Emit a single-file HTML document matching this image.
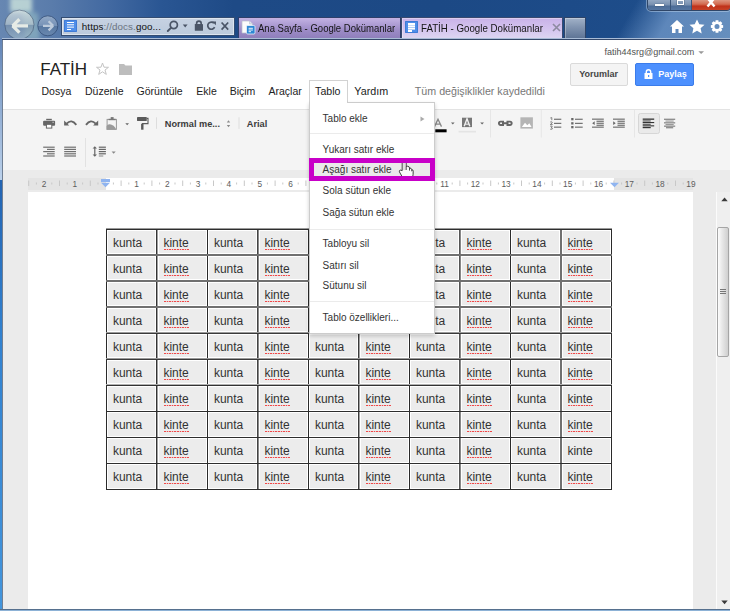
<!DOCTYPE html>
<html><head><meta charset="utf-8"><title>FATİH - Google Dokümanlar</title>
<style>
*{margin:0;padding:0;box-sizing:border-box}
html,body{width:730px;height:611px;overflow:hidden;background:#fff}
body{position:relative;font-family:"Liberation Sans",sans-serif}
.t{position:absolute;white-space:nowrap;line-height:1}
#chrome{position:absolute;left:0;top:0;width:730px;height:40px;
 background:linear-gradient(90deg,#6787b2 0%,#5a7cab 7%,#4269a1 15%,#2a5693 22%,#1e4a86 32%,#1c4985 60%,#1d4b88 78%,#1f4f8c 100%)}
#chrome2{position:absolute;left:560px;top:0;width:170px;height:40px;background:linear-gradient(120deg,rgba(100,140,190,0) 0%,rgba(100,140,190,0) 40%,rgba(105,145,195,0.85) 62%,rgba(110,150,195,0.9) 100%)}
#wc{position:absolute;left:646.5px;top:-2px;width:84px;height:12.6px;border:1px solid #2f4668;border-radius:0 0 4px 4px;overflow:hidden;background:#5f7ea6;box-shadow:0 0 0 1px rgba(200,220,240,0.45)}
.wcb{position:absolute;top:0;height:13px;border-right:1px solid #3a5478;background:linear-gradient(#98acc6 0%,#7890b0 45%,#4d6d98 55%,#5b7ba5 100%)}
#wclose{position:absolute;left:44.5px;top:0;width:39.5px;height:13px;background:linear-gradient(#e0a08c 0%,#d26a50 40%,#c0321a 55%,#c94a2e 100%)}
#addr{position:absolute;left:61px;top:17px;width:174px;height:19px;background:linear-gradient(#c6d2e2,#bccadc);border:1px solid #344d72;box-shadow:inset 0 0 0 1px #dde5ef}
.docicon{position:absolute;width:12.5px;height:12px;background:#4f8ee9;border-radius:1px;box-shadow:inset 0 0 0 1px #3f7bd6}
.docicon:after{content:"";position:absolute;left:2.5px;top:2.4px;width:7.5px;height:1.3px;background:#fff;box-shadow:0 2.3px 0 #fff,0 4.6px 0 #fff}
.docicon:before{content:"";position:absolute;left:2.5px;top:9.3px;width:4px;height:1.3px;background:#fff}
#tab1{position:absolute;left:238px;top:17px;width:162.5px;height:21px;background:linear-gradient(#c3b2e3,#9d8cc7 60%,#8f7fbb);border:1px solid #2e3f6a;border-bottom:none}
#tab2{position:absolute;left:400.5px;top:17px;width:162.5px;height:21px;background:linear-gradient(#c9b2e8,#d3c2ee 50%,#dcd5f1);border:1px solid #3a4a70;border-bottom:none;box-shadow:inset 1px 1px 0 rgba(255,255,255,0.35)}
#tab3{position:absolute;left:563.5px;top:17px;width:22px;height:21px;background:linear-gradient(#a2b2c8,#8194b0 45%,#5f7596);border:1px solid #2e4468;border-bottom:none;box-shadow:inset 1px 1px 0 rgba(255,255,255,0.3)}
#lframe{position:absolute;left:0;top:38px;width:3px;height:573px;background:linear-gradient(#6284b6 0px,#8aa8d0 60px,#b3cae6 130px,#bcd2ec 142.5px,#2364b2 142.5px,#3282d0 300px,#4395dc 571px)}
#bframe{position:absolute;left:0;top:609px;width:730px;height:2px;background:linear-gradient(#56708e 50%,#8db2d6 50%)}
#content{position:absolute;left:2px;top:38px;width:728px;height:571px;background:#fff;border-top:1px solid #a9bcd6;box-shadow:inset 0 1px 0 #34486a,inset 1px 0 0 #6f7f94}
#yorum{position:absolute;left:569.5px;top:63px;width:58.5px;height:23px;background:#f4f4f4;border:1px solid #dadada;border-radius:2px}
#paylas{position:absolute;left:635px;top:62.5px;width:59px;height:23.5px;background:#4d90fe;border:1px solid #3b7cea;border-radius:2px}
#toolbar{position:absolute;left:3px;top:109px;width:727px;height:61px;background:#f4f4f4;border-top:1px solid #e3e3e3}
#grayarea{position:absolute;left:3px;top:170px;width:727px;height:439px;background:#ebebeb}
#rulerg{position:absolute;top:177.5px;height:12px;background:#e4e4e4}
#rulerw{position:absolute;top:177.5px;height:12px;background:#fff}
#page{position:absolute;left:28px;top:192px;width:664.5px;height:417px;background:#fff}
#tbl .t{}
.sp{position:absolute;width:25.5px;height:1px;background:repeating-linear-gradient(90deg,#f04848 0 1.6px,rgba(240,72,72,0.25) 1.6px 2.6px)}
#tbl{position:absolute;left:0;top:0}
#tblbg{}
#sbar{position:absolute;left:716px;top:192px;width:14px;height:417px;background:#efefef;border-left:1px solid #fbfbfb}
#thumb{position:absolute;left:717px;top:227.3px;width:11.8px;height:130px;background:linear-gradient(90deg,#fdfdfd,#e8e8e8 40%,#cfcfcf);border:1px solid #a5a5a5;border-radius:2px}
#tabtab{position:absolute;left:309px;top:80.3px;width:39px;height:23px;background:#fff;border:1px solid #d2d2d2;border-bottom:none}
#dd{position:absolute;left:309px;top:102px;width:126px;height:232px;background:#fff;border:1px solid rgba(0,0,0,0.2);box-shadow:0 2px 4px rgba(0,0,0,0.2)}
#tabcover{position:absolute;left:310px;top:100px;width:37px;height:4px;background:#fff}
.sep{position:absolute;left:310px;width:124px;height:1px;background:#ebebeb}
#hl{position:absolute;left:310px;top:162.9px;width:124.5px;height:13.2px;background:#eaeaea}
#hlb{position:absolute;left:309.2px;top:157.9px;width:126.2px;height:23.2px;border:5px solid #c800c8}
</style></head>
<body>
<div id="chrome"></div>
<div id="chrome2"></div>
<svg style="position:absolute;left:0;top:0" width="64" height="40" viewBox="0 0 64 40">
 <defs>
  <linearGradient id="bbg" x1="0" y1="0" x2="0" y2="1">
   <stop offset="0" stop-color="#e2ebe8" stop-opacity="0.7"/>
   <stop offset="0.49" stop-color="#b9c8cf" stop-opacity="0.7"/>
   <stop offset="0.51" stop-color="#7d93ab" stop-opacity="0.6"/>
   <stop offset="1" stop-color="#b0c8d0" stop-opacity="0.55"/>
  </linearGradient>
  <linearGradient id="fbg" x1="0" y1="0" x2="0" y2="1">
   <stop offset="0" stop-color="#9db2cc" stop-opacity="0.85"/>
   <stop offset="0.49" stop-color="#7b95b8" stop-opacity="0.85"/>
   <stop offset="0.51" stop-color="#56769f" stop-opacity="0.9"/>
   <stop offset="1" stop-color="#6c8ab0" stop-opacity="0.9"/>
  </linearGradient>
  <filter id="gb" x="-50%" y="-50%" width="200%" height="200%"><feGaussianBlur stdDeviation="2.2"/></filter>
 </defs>
 <rect x="10" y="-3" width="22" height="15" fill="#d4ebe0" opacity="0.75" filter="url(#gb)"/>
 <path d="M22 10 L38 13 L40 40 L26 40 Z" fill="#a8d0cc" opacity="0.45" filter="url(#gb)"/>
 <circle cx="19.4" cy="24.7" r="14.6" fill="url(#bbg)" stroke="#3c506c" stroke-opacity="0.55" stroke-width="1"/>
 <path d="M12 25.9 L28 25.9 M12.6 25.9 L19.4 19.2 M12.6 25.9 L19.4 32.6" stroke="#e6ebe6" stroke-width="3.3" fill="none" stroke-linecap="butt" stroke-linejoin="miter"/>
 <circle cx="47.8" cy="25.8" r="10" fill="url(#fbg)" stroke="#354f78" stroke-opacity="0.8" stroke-width="1"/>
 <path d="M43 25.8 L53 25.8 M53.2 25.8 L48.6 21.2 M53.2 25.8 L48.6 30.4" stroke="#bccadb" stroke-width="2.3" fill="none"/>
</svg>
<div id="wc">
 <div class="wcb" style="left:0;width:23px"><div style="position:absolute;left:7px;top:4.5px;width:9px;height:2.5px;background:#fff;box-shadow:0 0 1px #123"></div></div>
 <div class="wcb" style="left:23px;width:21.5px"><div style="position:absolute;left:6.5px;top:0px;width:7px;height:6px;border:1.2px solid #fff;border-top-width:2.2px;box-shadow:0 0 1px #123"></div></div>
 <div id="wclose"><svg width="38" height="11" style="position:absolute;left:0;top:0"><path d="M15.5 -1 L22.5 7.5 M22.5 -1 L15.5 7.5" stroke="#fff" stroke-width="2.4"/></svg></div>
</div>
<div id="addr"></div>
<div class="docicon" style="left:64.4px;top:19.7px"></div>
<div class="t" style="left:81.8px;top:21.6px;font-size:9.8px;color:#111;letter-spacing:0.01em">https<span style="color:#6b7480">://docs.</span>goo...</div>
<svg style="position:absolute;left:166px;top:20px" width="66" height="14" viewBox="0 0 66 14">
 <circle cx="7.8" cy="5" r="3.6" stroke="#4a5567" stroke-width="1.7" fill="none"/>
 <path d="M5.2 7.6 L1.8 11" stroke="#4a5567" stroke-width="1.9" stroke-linecap="round"/>
 <path d="M16.8 4.6 L21.6 4.6 L19.2 7.4 Z" fill="#4a5567"/>
 <rect x="28.8" y="4" width="8.2" height="6.8" rx="0.6" fill="#4a5567"/>
 <path d="M30.6 4.5 L30.6 3.4 A2.3 2.3 0 0 1 35.2 3.4 L35.2 4.5" stroke="#4a5567" stroke-width="1.6" fill="none"/>
 <path d="M48.6 7.2 A3.6 3.6 0 1 1 48 3.2" stroke="#4a5567" stroke-width="1.7" fill="none"/>
 <path d="M46.2 1.6 L50 1.4 L49.8 5.2 Z" fill="#4a5567"/>
 <path d="M55.6 2.5 L62.2 9.6 M62.2 2.5 L55.6 9.6" stroke="#4a5567" stroke-width="1.7"/>
</svg>
<div id="tab1"></div>
<svg style="position:absolute;left:240px;top:19px" width="17" height="17" viewBox="0 0 17 17">
 <path d="M2 2 L9.5 2 L12.5 5 L12.5 14 L2 14 Z" fill="#fbfbfb" stroke="#b8bfcc" stroke-width="0.7"/>
 <path d="M9.5 2 L9.5 5 L12.5 5" fill="#dfe3ea" stroke="#b8bfcc" stroke-width="0.6"/>
 <rect x="6.5" y="6.5" width="8.5" height="8.5" rx="1.2" fill="#2c87d3" stroke="#e8f2fb" stroke-width="0.8"/>
 <path d="M8.6 9.3 H12.9 M8.6 11 H12.9 M8.6 12.7 H11" stroke="#fff" stroke-width="0.9"/>
</svg>
<div class="t" style="left:257.6px;top:22.6px;font-size:10.9px;color:#141414;transform:scaleX(0.875);transform-origin:0 0">Ana Sayfa - Google Dokümanlar</div>
<div id="tab2"></div>
<div class="docicon" style="left:405px;top:21px"></div>
<div class="t" style="left:421.3px;top:22.6px;font-size:10.9px;color:#141414;transform:scaleX(0.893);transform-origin:0 0">FATİH - Google Dokümanlar</div>
<svg style="position:absolute;left:552px;top:23px" width="9" height="9"><path d="M1 1 L8 8 M8 1 L1 8" stroke="#8d8aa0" stroke-width="1.6"/></svg>
<div id="tab3"></div>
<svg style="position:absolute;left:668px;top:18px" width="62" height="17" viewBox="0 0 62 17">
 <path d="M9 2 L2 8.5 L4 8.5 L4 15 L7.5 15 L7.5 11 L10.5 11 L10.5 15 L14 15 L14 8.5 L16 8.5 Z" fill="#fff"/>
 <path d="M29 1.5 L31.3 6.3 L36.5 6.8 L32.6 10.3 L33.7 15.5 L29 12.8 L24.3 15.5 L25.4 10.3 L21.5 6.8 L26.7 6.3 Z" fill="#fff"/>
 <g transform="translate(49 8.5)"><path d="M6.15 -1.37 L6.15 1.37 L4.27 1.71 L4.23 1.81 L5.32 3.38 L3.38 5.32 L1.81 4.23 L1.71 4.27 L1.37 6.15 L-1.37 6.15 L-1.71 4.27 L-1.81 4.23 L-3.38 5.32 L-5.32 3.38 L-4.23 1.81 L-4.27 1.71 L-6.15 1.37 L-6.15 -1.37 L-4.27 -1.71 L-4.23 -1.81 L-5.32 -3.38 L-3.38 -5.32 L-1.81 -4.23 L-1.71 -4.27 L-1.37 -6.15 L1.37 -6.15 L1.71 -4.27 L1.81 -4.23 L3.38 -5.32 L5.32 -3.38 L4.23 -1.81 L4.27 -1.71 Z M2.5 0 A2.5 2.5 0 1 0 -2.5 0 A2.5 2.5 0 1 0 2.5 0 Z" fill="#fff" fill-rule="evenodd"/></g>
</svg>
<div id="lframe"></div>
<div id="bframe"></div>
<div id="content"></div>
<div class="t" style="left:40.20px;top:60.81px;font-size:17px;color:#222;font-weight:400;">FATİH</div>
<svg style="position:absolute;left:96px;top:62px" width="38" height="14" viewBox="0 0 38 14">
 <path d="M6.5 1 L8 5.2 L12.5 5.3 L9 8 L10.3 12.4 L6.5 9.8 L2.7 12.4 L4 8 L0.5 5.3 L5 5.2 Z" fill="none" stroke="#c4c4c4" stroke-width="1"/>
 <path d="M23 2 L28 2 L29.5 3.5 L36 3.5 L36 13 L23 13 Z" fill="#bdbdbd"/>
</svg>
<div class="t" style="left:604.50px;top:47.58px;font-size:9px;color:#505050;font-weight:400;">fatih44srg@gmail.com</div>
<svg style="position:absolute;left:698px;top:51px" width="7" height="4"><path d="M0.3 0.3 L6 0.3 L3.15 3 Z" fill="#999"/></svg>
<div id="yorum"></div>
<div class="t" style="left:579.20px;top:69.78px;font-size:9px;color:#444;font-weight:700;">Yorumlar</div>
<div id="paylas"></div>
<svg style="position:absolute;left:644px;top:69px" width="9" height="10" viewBox="0 0 9 10">
 <rect x="0.5" y="4" width="8" height="6" rx="0.5" fill="#fff"/>
 <path d="M2.3 4.5 L2.3 3 A2.2 2.2 0 0 1 6.7 3 L6.7 4.5" stroke="#fff" stroke-width="1.4" fill="none"/>
 <rect x="4" y="6" width="1.2" height="2" fill="#4d90fe"/>
</svg>
<div class="t" style="left:658.20px;top:69.78px;font-size:9px;color:#fff;font-weight:700;">Paylaş</div>
<div class="t" style="left:41.50px;top:86.01px;font-size:10.5px;color:#222;font-weight:400;">Dosya</div>
<div class="t" style="left:85.00px;top:86.01px;font-size:10.5px;color:#222;font-weight:400;">Düzenle</div>
<div class="t" style="left:136.60px;top:86.01px;font-size:10.5px;color:#222;font-weight:400;">Görüntüle</div>
<div class="t" style="left:196.30px;top:86.01px;font-size:10.5px;color:#222;font-weight:400;">Ekle</div>
<div class="t" style="left:229.70px;top:86.01px;font-size:10.5px;color:#222;font-weight:400;">Biçim</div>
<div class="t" style="left:268.50px;top:86.01px;font-size:10.5px;color:#222;font-weight:400;">Araçlar</div>
<div class="t" style="left:315.80px;top:86.01px;font-size:10.5px;color:#222;font-weight:400;">Tablo</div>
<div class="t" style="left:354.30px;top:85.80px;font-size:10.75px;color:#222;font-weight:400;">Yardım</div>
<div class="t" style="left:414.80px;top:85.84px;font-size:10.7px;color:#777;font-weight:400;">Tüm değişiklikler kaydedildi</div>
<div id="toolbar"></div>
<div id="grayarea"></div>
<svg style="position:absolute;left:0;top:110px" width="730" height="60" viewBox="0 110 730 60">
 <g fill="#666">
  <!-- print -->
  <rect x="46.2" y="118.8" width="5.6" height="1.4"/>
  <rect x="43.1" y="120.8" width="12" height="5" rx="1"/>
  <rect x="46.4" y="124.3" width="5.4" height="3.8" fill="#fff" stroke="#666" stroke-width="1"/>
  <rect x="52.6" y="121.8" width="1" height="1" fill="#eee"/>
  <!-- undo -->
  <path d="M64.1 120.4 L64.1 125.6 L69.2 125.6 Z"/>
  <path d="M66.6 123.6 Q71.5 118.6 76.3 124.8" stroke="#666" stroke-width="1.9" fill="none"/>
  <!-- redo -->
  <path d="M98.2 120.4 L98.2 125.6 L93.1 125.6 Z"/>
  <path d="M95.7 123.6 Q90.8 118.6 86 124.8" stroke="#666" stroke-width="1.9" fill="none"/>
  <!-- paste -->
  <rect x="107.1" y="119.4" width="9.3" height="9.9" fill="none" stroke="#999" stroke-width="1"/>
  <rect x="110.7" y="117.1" width="2.9" height="2" fill="#777"/>
  <rect x="108.6" y="118.8" width="7" height="1.4" fill="#777"/>
  <path d="M106.6 129.8 L106.6 126 Q108 123.5 111 124.6 Q114 125.6 115.5 128 L116 129.8 Z" fill="#9a9a9a"/>
  <path d="M125.3 123.2 L129 123.2 L127.15 125.2 Z"/>
  <!-- paint format -->
  <rect x="137" y="117.1" width="9.8" height="3.9" rx="0.4" fill="#5a5a5a"/>
  <path d="M146.8 118.4 L148 118.4 L148 123.6 L142.3 123.6 L142.3 124.5" stroke="#5a5a5a" stroke-width="1.1" fill="none"/>
  <rect x="141.1" y="124" width="2.4" height="5.7" fill="#5a5a5a"/>
 </g>
 <rect x="156" y="117.3" width="1" height="11.5" fill="#ddd"/>
 <path d="M226.8 122.4 L230.2 122.4 L228.5 120.2 Z M226.8 125 L230.2 125 L228.5 127.2 Z" fill="#8a8a8a"/>
 <rect x="238.5" y="117.3" width="1" height="11.5" fill="#ddd"/>
 <!-- row 2 -->
 <g fill="#707070">
  <rect x="43.2" y="146.6" width="11.5" height="1.2"/>
  <rect x="47" y="148.8" width="7.7" height="1.2"/>
  <rect x="43.2" y="151.0" width="11.5" height="1.2"/>
  <rect x="47" y="153.2" width="7.7" height="1.2"/>
  <rect x="43.2" y="155.4" width="11.5" height="1.2"/>
  <rect x="64.2" y="146.6" width="11.8" height="1.2"/>
  <rect x="64.2" y="148.8" width="11.8" height="1.2"/>
  <rect x="64.2" y="151.0" width="11.8" height="1.2"/>
  <rect x="64.2" y="153.2" width="11.8" height="1.2"/>
  <rect x="64.2" y="155.4" width="11.8" height="1.2"/>
 </g>
 <rect x="85" y="138" width="1" height="29" fill="#e2e2e2"/>
 <g fill="#666">
  <rect x="94.2" y="148" width="1.2" height="7"/>
  <path d="M92.6 148.6 L97 148.6 L94.8 146.2 Z M92.6 154.4 L97 154.4 L94.8 156.8 Z"/>
  <rect x="98.8" y="146.6" width="7.1" height="1.2"/>
  <rect x="98.8" y="148.8" width="7.1" height="1.2"/>
  <rect x="98.8" y="151.0" width="7.1" height="1.2"/>
  <rect x="98.8" y="153.2" width="7.1" height="1.2"/>
  <rect x="98.8" y="155.4" width="4.5" height="1.2" fill="#999"/>
  <path d="M111.6 151.6 L115.7 151.6 L113.65 153.7 Z" fill="#888"/>
 </g>
 <!-- right part row1 -->
 <g fill="#666">
  <path d="M434.5 126.6 L438 119.2 L441.5 126.6 M436 124.2 H440" stroke="#888" stroke-width="1.3" fill="none"/>
  <rect x="435.3" y="129.3" width="11.3" height="3" fill="#000"/>
  <path d="M451 122.5 L454.6 122.5 L452.8 124.6 Z"/>
  <rect x="462" y="117.7" width="10" height="9.4" fill="#777"/>
  <path d="M464.2 126.2 L467 118.8 L469.8 126.2" stroke="#f1f1f1" stroke-width="1.4" fill="none"/>
  <rect x="465.2" y="123.6" width="3.6" height="1.1" fill="#f1f1f1"/>
  <rect x="458.6" y="130.8" width="17.4" height="1.7" fill="#e4e4e4"/>
  <path d="M480.2 122.5 L484 122.5 L482.1 124.6 Z"/>
 </g>
 <rect x="490" y="109.5" width="1" height="28" fill="#e6e6e6"/>
 <g fill="none" stroke="#666" stroke-width="1.9">
  <path d="M504 121.6 H500.6 A1.7 1.7 0 0 0 500.6 125 H504 M506.5 121.6 H510 A1.7 1.7 0 0 1 510 125 H506.5 M502 123.3 H508.5"/>
 </g>
 <rect x="520.4" y="117.3" width="12.5" height="11.3" fill="#b5b5b5"/>
 <path d="M521.8 127 L525 122.8 L527.3 125.2 L529.3 123.3 L531.6 127 Z" fill="#fff"/>
 <rect x="540.8" y="109.5" width="1" height="28" fill="#e6e6e6"/>
 <g fill="#666">
  <path d="M550.3 118 L551.8 117.6 L551.8 120.2" stroke="#777" stroke-width="0.9" fill="none"/>
  <path d="M550.2 122 Q552.5 121.3 552.3 122.8 L550.2 124.6 L552.7 124.6" stroke="#777" stroke-width="0.9" fill="none"/>
  <path d="M550.2 126.2 Q552.6 125.6 552.2 127 Q551.5 127.5 551 127.5 Q552.8 127.8 552.3 129 Q551 129.6 550.2 129.1" stroke="#777" stroke-width="0.9" fill="none"/>
  <rect x="554" y="118.7" width="7.3" height="1.1"/><rect x="554" y="122.8" width="7.3" height="1.1"/><rect x="554" y="126.6" width="7.3" height="1.1"/>
  <rect x="571.2" y="118" width="2.3" height="2.3"/><rect x="571.2" y="122.2" width="2.3" height="2.3"/><rect x="571.2" y="126" width="2.3" height="2.3"/>
  <rect x="575" y="118.7" width="7.7" height="1.1"/><rect x="575" y="122.8" width="7.7" height="1.1"/><rect x="575" y="126.6" width="7.7" height="1.1"/>
  <rect x="592" y="118.6" width="11.8" height="1.1"/><rect x="596.5" y="120.7" width="7.3" height="1.1"/><rect x="596.5" y="122.7" width="7.3" height="1.1"/><rect x="596.5" y="124.7" width="7.3" height="1.1"/><rect x="592" y="126.6" width="11.8" height="1.1"/>
  <path d="M594.7 121.3 L592.2 123.2 L594.7 125.1 Z"/>
  <rect x="613" y="118.6" width="11.8" height="1.1"/><rect x="617.5" y="120.7" width="7.3" height="1.1"/><rect x="617.5" y="122.7" width="7.3" height="1.1"/><rect x="617.5" y="124.7" width="7.3" height="1.1"/><rect x="613" y="126.6" width="11.8" height="1.1"/>
  <path d="M613.2 121.3 L615.7 123.2 L613.2 125.1 Z"/>
 </g>
 <rect x="634" y="109.5" width="1" height="28" fill="#e6e6e6"/>
 <rect x="638.5" y="113.5" width="21" height="20" rx="2" fill="#eaeaea" stroke="#d6d6d6" stroke-width="1"/>
 <g fill="#333">
  <rect x="642.7" y="118.5" width="11.5" height="1.3"/><rect x="642.7" y="120.3" width="8" height="1.3" fill="#666"/><rect x="642.7" y="122" width="11.5" height="1.1"/><rect x="642.7" y="123.7" width="8" height="1.3" fill="#666"/><rect x="642.7" y="125.3" width="11.5" height="1.1"/><rect x="642.7" y="127" width="8" height="1.2"/>
 </g>
 <g fill="#777">
  <rect x="664" y="118.7" width="11.2" height="1.1"/><rect x="665.5" y="120.5" width="8.2" height="1.1" fill="#999"/><rect x="664" y="122.3" width="11.2" height="1.1"/><rect x="665.5" y="124" width="8.2" height="1.1" fill="#999"/><rect x="664" y="125.6" width="11.2" height="1.1"/><rect x="666" y="127.2" width="7.2" height="1.1"/>
 </g>
</svg>
<div class="t" style="left:164.80px;top:119.61px;font-size:9.2px;color:#3c3c3c;font-weight:700;">Normal me...</div>
<div class="t" style="left:246.80px;top:119.61px;font-size:9.2px;color:#3c3c3c;font-weight:700;">Arial</div>
<div id="rulerg" style="left:27.5px;width:665px"></div>
<div id="rulerw" style="left:105.7px;width:508.4px"></div>
<svg style="position:absolute;left:0;top:176px" width="730" height="16" viewBox="0 176 730 16"><rect x="28.2" y="180.5" width="1" height="5.5" fill="#c8c8c8"/><rect x="35.9" y="182.5" width="1" height="2" fill="#c8c8c8"/><rect x="51.3" y="182.5" width="1" height="2" fill="#c8c8c8"/><rect x="59.0" y="180.5" width="1" height="5.5" fill="#c8c8c8"/><rect x="66.7" y="182.5" width="1" height="2" fill="#c8c8c8"/><rect x="82.1" y="182.5" width="1" height="2" fill="#c8c8c8"/><rect x="89.8" y="180.5" width="1" height="5.5" fill="#c8c8c8"/><rect x="97.5" y="182.5" width="1" height="2" fill="#c8c8c8"/><rect x="112.9" y="182.5" width="1" height="2" fill="#c8c8c8"/><rect x="120.6" y="180.5" width="1" height="5.5" fill="#c8c8c8"/><rect x="128.3" y="182.5" width="1" height="2" fill="#c8c8c8"/><rect x="143.7" y="182.5" width="1" height="2" fill="#c8c8c8"/><rect x="151.4" y="180.5" width="1" height="5.5" fill="#c8c8c8"/><rect x="159.1" y="182.5" width="1" height="2" fill="#c8c8c8"/><rect x="174.5" y="182.5" width="1" height="2" fill="#c8c8c8"/><rect x="182.2" y="180.5" width="1" height="5.5" fill="#c8c8c8"/><rect x="189.9" y="182.5" width="1" height="2" fill="#c8c8c8"/><rect x="205.3" y="182.5" width="1" height="2" fill="#c8c8c8"/><rect x="213.0" y="180.5" width="1" height="5.5" fill="#c8c8c8"/><rect x="220.7" y="182.5" width="1" height="2" fill="#c8c8c8"/><rect x="236.1" y="182.5" width="1" height="2" fill="#c8c8c8"/><rect x="243.8" y="180.5" width="1" height="5.5" fill="#c8c8c8"/><rect x="251.5" y="182.5" width="1" height="2" fill="#c8c8c8"/><rect x="266.9" y="182.5" width="1" height="2" fill="#c8c8c8"/><rect x="274.6" y="180.5" width="1" height="5.5" fill="#c8c8c8"/><rect x="282.3" y="182.5" width="1" height="2" fill="#c8c8c8"/><rect x="297.7" y="182.5" width="1" height="2" fill="#c8c8c8"/><rect x="305.4" y="180.5" width="1" height="5.5" fill="#c8c8c8"/><rect x="313.1" y="182.5" width="1" height="2" fill="#c8c8c8"/><rect x="328.5" y="182.5" width="1" height="2" fill="#c8c8c8"/><rect x="336.2" y="180.5" width="1" height="5.5" fill="#c8c8c8"/><rect x="343.9" y="182.5" width="1" height="2" fill="#c8c8c8"/><rect x="359.3" y="182.5" width="1" height="2" fill="#c8c8c8"/><rect x="367.0" y="180.5" width="1" height="5.5" fill="#c8c8c8"/><rect x="374.7" y="182.5" width="1" height="2" fill="#c8c8c8"/><rect x="390.1" y="182.5" width="1" height="2" fill="#c8c8c8"/><rect x="397.8" y="180.5" width="1" height="5.5" fill="#c8c8c8"/><rect x="405.5" y="182.5" width="1" height="2" fill="#c8c8c8"/><rect x="420.9" y="182.5" width="1" height="2" fill="#c8c8c8"/><rect x="428.6" y="180.5" width="1" height="5.5" fill="#c8c8c8"/><rect x="436.3" y="182.5" width="1" height="2" fill="#c8c8c8"/><rect x="451.7" y="182.5" width="1" height="2" fill="#c8c8c8"/><rect x="459.4" y="180.5" width="1" height="5.5" fill="#c8c8c8"/><rect x="467.1" y="182.5" width="1" height="2" fill="#c8c8c8"/><rect x="482.5" y="182.5" width="1" height="2" fill="#c8c8c8"/><rect x="490.2" y="180.5" width="1" height="5.5" fill="#c8c8c8"/><rect x="497.9" y="182.5" width="1" height="2" fill="#c8c8c8"/><rect x="513.3" y="182.5" width="1" height="2" fill="#c8c8c8"/><rect x="521.0" y="180.5" width="1" height="5.5" fill="#c8c8c8"/><rect x="528.7" y="182.5" width="1" height="2" fill="#c8c8c8"/><rect x="544.1" y="182.5" width="1" height="2" fill="#c8c8c8"/><rect x="551.8" y="180.5" width="1" height="5.5" fill="#c8c8c8"/><rect x="559.5" y="182.5" width="1" height="2" fill="#c8c8c8"/><rect x="574.9" y="182.5" width="1" height="2" fill="#c8c8c8"/><rect x="582.6" y="180.5" width="1" height="5.5" fill="#c8c8c8"/><rect x="590.3" y="182.5" width="1" height="2" fill="#c8c8c8"/><rect x="605.7" y="182.5" width="1" height="2" fill="#c8c8c8"/><rect x="613.4" y="180.5" width="1" height="5.5" fill="#c8c8c8"/><rect x="621.1" y="182.5" width="1" height="2" fill="#c8c8c8"/><rect x="636.5" y="182.5" width="1" height="2" fill="#c8c8c8"/><rect x="644.2" y="180.5" width="1" height="5.5" fill="#c8c8c8"/><rect x="651.9" y="182.5" width="1" height="2" fill="#c8c8c8"/><rect x="667.3" y="182.5" width="1" height="2" fill="#c8c8c8"/><rect x="675.0" y="180.5" width="1" height="5.5" fill="#c8c8c8"/><rect x="682.7" y="182.5" width="1" height="2" fill="#c8c8c8"/></svg>
<div class="t rn" style="left:24.1px;top:180.4px;width:40px;text-align:center;font-size:8.3px;color:#5c5c5c">2</div>
<div class="t rn" style="left:54.9px;top:180.4px;width:40px;text-align:center;font-size:8.3px;color:#5c5c5c">1</div>
<div class="t rn" style="left:116.5px;top:180.4px;width:40px;text-align:center;font-size:8.3px;color:#5c5c5c">1</div>
<div class="t rn" style="left:147.3px;top:180.4px;width:40px;text-align:center;font-size:8.3px;color:#5c5c5c">2</div>
<div class="t rn" style="left:178.1px;top:180.4px;width:40px;text-align:center;font-size:8.3px;color:#5c5c5c">3</div>
<div class="t rn" style="left:208.9px;top:180.4px;width:40px;text-align:center;font-size:8.3px;color:#5c5c5c">4</div>
<div class="t rn" style="left:239.7px;top:180.4px;width:40px;text-align:center;font-size:8.3px;color:#5c5c5c">5</div>
<div class="t rn" style="left:270.5px;top:180.4px;width:40px;text-align:center;font-size:8.3px;color:#5c5c5c">6</div>
<div class="t rn" style="left:301.3px;top:180.4px;width:40px;text-align:center;font-size:8.3px;color:#5c5c5c">7</div>
<div class="t rn" style="left:332.1px;top:180.4px;width:40px;text-align:center;font-size:8.3px;color:#5c5c5c">8</div>
<div class="t rn" style="left:362.9px;top:180.4px;width:40px;text-align:center;font-size:8.3px;color:#5c5c5c">9</div>
<div class="t rn" style="left:393.7px;top:180.4px;width:40px;text-align:center;font-size:8.3px;color:#5c5c5c">10</div>
<div class="t rn" style="left:424.5px;top:180.4px;width:40px;text-align:center;font-size:8.3px;color:#5c5c5c">11</div>
<div class="t rn" style="left:455.3px;top:180.4px;width:40px;text-align:center;font-size:8.3px;color:#5c5c5c">12</div>
<div class="t rn" style="left:486.1px;top:180.4px;width:40px;text-align:center;font-size:8.3px;color:#5c5c5c">13</div>
<div class="t rn" style="left:516.9px;top:180.4px;width:40px;text-align:center;font-size:8.3px;color:#5c5c5c">14</div>
<div class="t rn" style="left:547.7px;top:180.4px;width:40px;text-align:center;font-size:8.3px;color:#5c5c5c">15</div>
<div class="t rn" style="left:578.5px;top:180.4px;width:40px;text-align:center;font-size:8.3px;color:#5c5c5c">16</div>
<div class="t rn" style="left:609.3px;top:180.4px;width:40px;text-align:center;font-size:8.3px;color:#5c5c5c">17</div>
<div class="t rn" style="left:640.1px;top:180.4px;width:40px;text-align:center;font-size:8.3px;color:#5c5c5c">18</div>
<div class="t rn" style="left:670.9px;top:180.4px;width:40px;text-align:center;font-size:8.3px;color:#5c5c5c">19</div>
<svg style="position:absolute;left:100.2px;top:178px" width="11" height="10" viewBox="0 0 11 10">
 <rect x="1" y="1" width="9" height="3" fill="#8fb4f0"/>
 <path d="M1 4.8 L10 4.8 L5.5 9.2 Z" fill="#8fb4f0"/>
</svg>
<svg style="position:absolute;left:608.6px;top:182px" width="11" height="6" viewBox="0 0 11 6">
 <path d="M1 0.8 L10 0.8 L5.5 5.2 Z" fill="#8fb4f0"/>
</svg>
<div id="page"></div>
<svg style="position:absolute;left:0;top:0" width="730" height="611" shape-rendering="crispEdges"><rect x="108" y="231" width="47" height="22" fill="#ececec"/><rect x="159" y="231" width="47" height="22" fill="#ececec"/><rect x="209" y="231" width="47" height="22" fill="#ececec"/><rect x="260" y="231" width="47" height="22" fill="#ececec"/><rect x="310" y="231" width="47" height="22" fill="#ececec"/><rect x="361" y="231" width="47" height="22" fill="#ececec"/><rect x="411" y="231" width="47" height="22" fill="#ececec"/><rect x="462" y="231" width="47" height="22" fill="#ececec"/><rect x="512" y="231" width="47" height="22" fill="#ececec"/><rect x="563" y="231" width="47" height="22" fill="#ececec"/><rect x="108" y="257" width="47" height="22" fill="#ececec"/><rect x="159" y="257" width="47" height="22" fill="#ececec"/><rect x="209" y="257" width="47" height="22" fill="#ececec"/><rect x="260" y="257" width="47" height="22" fill="#ececec"/><rect x="310" y="257" width="47" height="22" fill="#ececec"/><rect x="361" y="257" width="47" height="22" fill="#ececec"/><rect x="411" y="257" width="47" height="22" fill="#ececec"/><rect x="462" y="257" width="47" height="22" fill="#ececec"/><rect x="512" y="257" width="47" height="22" fill="#ececec"/><rect x="563" y="257" width="47" height="22" fill="#ececec"/><rect x="108" y="283" width="47" height="22" fill="#ececec"/><rect x="159" y="283" width="47" height="22" fill="#ececec"/><rect x="209" y="283" width="47" height="22" fill="#ececec"/><rect x="260" y="283" width="47" height="22" fill="#ececec"/><rect x="310" y="283" width="47" height="22" fill="#ececec"/><rect x="361" y="283" width="47" height="22" fill="#ececec"/><rect x="411" y="283" width="47" height="22" fill="#ececec"/><rect x="462" y="283" width="47" height="22" fill="#ececec"/><rect x="512" y="283" width="47" height="22" fill="#ececec"/><rect x="563" y="283" width="47" height="22" fill="#ececec"/><rect x="108" y="309" width="47" height="22" fill="#ececec"/><rect x="159" y="309" width="47" height="22" fill="#ececec"/><rect x="209" y="309" width="47" height="22" fill="#ececec"/><rect x="260" y="309" width="47" height="22" fill="#ececec"/><rect x="310" y="309" width="47" height="22" fill="#ececec"/><rect x="361" y="309" width="47" height="22" fill="#ececec"/><rect x="411" y="309" width="47" height="22" fill="#ececec"/><rect x="462" y="309" width="47" height="22" fill="#ececec"/><rect x="512" y="309" width="47" height="22" fill="#ececec"/><rect x="563" y="309" width="47" height="22" fill="#ececec"/><rect x="108" y="335" width="47" height="22" fill="#ececec"/><rect x="159" y="335" width="47" height="22" fill="#ececec"/><rect x="209" y="335" width="47" height="22" fill="#ececec"/><rect x="260" y="335" width="47" height="22" fill="#ececec"/><rect x="310" y="335" width="47" height="22" fill="#ececec"/><rect x="361" y="335" width="47" height="22" fill="#ececec"/><rect x="411" y="335" width="47" height="22" fill="#ececec"/><rect x="462" y="335" width="47" height="22" fill="#ececec"/><rect x="512" y="335" width="47" height="22" fill="#ececec"/><rect x="563" y="335" width="47" height="22" fill="#ececec"/><rect x="108" y="361" width="47" height="22" fill="#ececec"/><rect x="159" y="361" width="47" height="22" fill="#ececec"/><rect x="209" y="361" width="47" height="22" fill="#ececec"/><rect x="260" y="361" width="47" height="22" fill="#ececec"/><rect x="310" y="361" width="47" height="22" fill="#ececec"/><rect x="361" y="361" width="47" height="22" fill="#ececec"/><rect x="411" y="361" width="47" height="22" fill="#ececec"/><rect x="462" y="361" width="47" height="22" fill="#ececec"/><rect x="512" y="361" width="47" height="22" fill="#ececec"/><rect x="563" y="361" width="47" height="22" fill="#ececec"/><rect x="108" y="387" width="47" height="23" fill="#ececec"/><rect x="159" y="387" width="47" height="23" fill="#ececec"/><rect x="209" y="387" width="47" height="23" fill="#ececec"/><rect x="260" y="387" width="47" height="23" fill="#ececec"/><rect x="310" y="387" width="47" height="23" fill="#ececec"/><rect x="361" y="387" width="47" height="23" fill="#ececec"/><rect x="411" y="387" width="47" height="23" fill="#ececec"/><rect x="462" y="387" width="47" height="23" fill="#ececec"/><rect x="512" y="387" width="47" height="23" fill="#ececec"/><rect x="563" y="387" width="47" height="23" fill="#ececec"/><rect x="108" y="413" width="47" height="23" fill="#ececec"/><rect x="159" y="413" width="47" height="23" fill="#ececec"/><rect x="209" y="413" width="47" height="23" fill="#ececec"/><rect x="260" y="413" width="47" height="23" fill="#ececec"/><rect x="310" y="413" width="47" height="23" fill="#ececec"/><rect x="361" y="413" width="47" height="23" fill="#ececec"/><rect x="411" y="413" width="47" height="23" fill="#ececec"/><rect x="462" y="413" width="47" height="23" fill="#ececec"/><rect x="512" y="413" width="47" height="23" fill="#ececec"/><rect x="563" y="413" width="47" height="23" fill="#ececec"/><rect x="108" y="439" width="47" height="23" fill="#ececec"/><rect x="159" y="439" width="47" height="23" fill="#ececec"/><rect x="209" y="439" width="47" height="23" fill="#ececec"/><rect x="260" y="439" width="47" height="23" fill="#ececec"/><rect x="310" y="439" width="47" height="23" fill="#ececec"/><rect x="361" y="439" width="47" height="23" fill="#ececec"/><rect x="411" y="439" width="47" height="23" fill="#ececec"/><rect x="462" y="439" width="47" height="23" fill="#ececec"/><rect x="512" y="439" width="47" height="23" fill="#ececec"/><rect x="563" y="439" width="47" height="23" fill="#ececec"/><rect x="108" y="465" width="47" height="23" fill="#ececec"/><rect x="159" y="465" width="47" height="23" fill="#ececec"/><rect x="209" y="465" width="47" height="23" fill="#ececec"/><rect x="260" y="465" width="47" height="23" fill="#ececec"/><rect x="310" y="465" width="47" height="23" fill="#ececec"/><rect x="361" y="465" width="47" height="23" fill="#ececec"/><rect x="411" y="465" width="47" height="23" fill="#ececec"/><rect x="462" y="465" width="47" height="23" fill="#ececec"/><rect x="512" y="465" width="47" height="23" fill="#ececec"/><rect x="563" y="465" width="47" height="23" fill="#ececec"/><rect x="106" y="229" width="1" height="261" fill="#2a2a2a"/><rect x="156" y="229" width="1" height="261" fill="#333"/><rect x="157" y="229" width="1" height="261" fill="#a0a0a0"/><rect x="207" y="229" width="1" height="261" fill="#2a2a2a"/><rect x="257" y="229" width="1" height="261" fill="#444"/><rect x="258" y="229" width="1" height="261" fill="#8a8a8a"/><rect x="308" y="229" width="1" height="261" fill="#2a2a2a"/><rect x="358" y="229" width="1" height="261" fill="#3a3a3a"/><rect x="359" y="229" width="1" height="261" fill="#a0a0a0"/><rect x="409" y="229" width="1" height="261" fill="#2a2a2a"/><rect x="459" y="229" width="1" height="261" fill="#555"/><rect x="460" y="229" width="1" height="261" fill="#888"/><rect x="510" y="229" width="1" height="261" fill="#2a2a2a"/><rect x="560" y="229" width="1" height="261" fill="#707070"/><rect x="561" y="229" width="1" height="261" fill="#707070"/><rect x="611" y="229" width="1" height="261" fill="#2a2a2a"/><rect x="106" y="228" width="506" height="1" fill="#9a9a9a"/><rect x="106" y="229" width="506" height="1" fill="#2e2e2e"/><rect x="106" y="254" width="506" height="1" fill="#707070"/><rect x="106" y="255" width="506" height="1" fill="#707070"/><rect x="106" y="280" width="506" height="1" fill="#707070"/><rect x="106" y="281" width="506" height="1" fill="#707070"/><rect x="106" y="306" width="506" height="1" fill="#707070"/><rect x="106" y="307" width="506" height="1" fill="#707070"/><rect x="106" y="332" width="506" height="1" fill="#9a9a9a"/><rect x="106" y="333" width="506" height="1" fill="#3a3a3a"/><rect x="106" y="358" width="506" height="1" fill="#9a9a9a"/><rect x="106" y="359" width="506" height="1" fill="#3a3a3a"/><rect x="106" y="384" width="506" height="1" fill="#b0b0b0"/><rect x="106" y="385" width="506" height="1" fill="#333"/><rect x="106" y="411" width="506" height="1" fill="#2e2e2e"/><rect x="106" y="437" width="506" height="1" fill="#2e2e2e"/><rect x="106" y="463" width="506" height="1" fill="#2e2e2e"/><rect x="106" y="489" width="506" height="1" fill="#2e2e2e"/></svg>
<div id="tbl"><div class="t" style="left:112.90px;top:237.24px;font-size:12px;color:#333;font-weight:400;">kunta</div>
<div class="t" style="left:163.40px;top:237.24px;font-size:12px;color:#333;font-weight:400;">kinte</div>
<div class="sp" style="left:163.5px;top:249.0px"></div><div class="t" style="left:213.90px;top:237.24px;font-size:12px;color:#333;font-weight:400;">kunta</div>
<div class="t" style="left:264.40px;top:237.24px;font-size:12px;color:#333;font-weight:400;">kinte</div>
<div class="sp" style="left:264.5px;top:249.0px"></div><div class="t" style="left:314.90px;top:237.24px;font-size:12px;color:#333;font-weight:400;">kunta</div>
<div class="t" style="left:365.40px;top:237.24px;font-size:12px;color:#333;font-weight:400;">kinte</div>
<div class="sp" style="left:365.5px;top:249.0px"></div><div class="t" style="left:415.90px;top:237.24px;font-size:12px;color:#333;font-weight:400;">kunta</div>
<div class="t" style="left:466.40px;top:237.24px;font-size:12px;color:#333;font-weight:400;">kinte</div>
<div class="sp" style="left:466.5px;top:249.0px"></div><div class="t" style="left:516.90px;top:237.24px;font-size:12px;color:#333;font-weight:400;">kunta</div>
<div class="t" style="left:567.40px;top:237.24px;font-size:12px;color:#333;font-weight:400;">kinte</div>
<div class="sp" style="left:567.5px;top:249.0px"></div><div class="t" style="left:112.90px;top:263.24px;font-size:12px;color:#333;font-weight:400;">kunta</div>
<div class="t" style="left:163.40px;top:263.24px;font-size:12px;color:#333;font-weight:400;">kinte</div>
<div class="sp" style="left:163.5px;top:275.0px"></div><div class="t" style="left:213.90px;top:263.24px;font-size:12px;color:#333;font-weight:400;">kunta</div>
<div class="t" style="left:264.40px;top:263.24px;font-size:12px;color:#333;font-weight:400;">kinte</div>
<div class="sp" style="left:264.5px;top:275.0px"></div><div class="t" style="left:314.90px;top:263.24px;font-size:12px;color:#333;font-weight:400;">kunta</div>
<div class="t" style="left:365.40px;top:263.24px;font-size:12px;color:#333;font-weight:400;">kinte</div>
<div class="sp" style="left:365.5px;top:275.0px"></div><div class="t" style="left:415.90px;top:263.24px;font-size:12px;color:#333;font-weight:400;">kunta</div>
<div class="t" style="left:466.40px;top:263.24px;font-size:12px;color:#333;font-weight:400;">kinte</div>
<div class="sp" style="left:466.5px;top:275.0px"></div><div class="t" style="left:516.90px;top:263.24px;font-size:12px;color:#333;font-weight:400;">kunta</div>
<div class="t" style="left:567.40px;top:263.24px;font-size:12px;color:#333;font-weight:400;">kinte</div>
<div class="sp" style="left:567.5px;top:275.0px"></div><div class="t" style="left:112.90px;top:289.24px;font-size:12px;color:#333;font-weight:400;">kunta</div>
<div class="t" style="left:163.40px;top:289.24px;font-size:12px;color:#333;font-weight:400;">kinte</div>
<div class="sp" style="left:163.5px;top:301.0px"></div><div class="t" style="left:213.90px;top:289.24px;font-size:12px;color:#333;font-weight:400;">kunta</div>
<div class="t" style="left:264.40px;top:289.24px;font-size:12px;color:#333;font-weight:400;">kinte</div>
<div class="sp" style="left:264.5px;top:301.0px"></div><div class="t" style="left:314.90px;top:289.24px;font-size:12px;color:#333;font-weight:400;">kunta</div>
<div class="t" style="left:365.40px;top:289.24px;font-size:12px;color:#333;font-weight:400;">kinte</div>
<div class="sp" style="left:365.5px;top:301.0px"></div><div class="t" style="left:415.90px;top:289.24px;font-size:12px;color:#333;font-weight:400;">kunta</div>
<div class="t" style="left:466.40px;top:289.24px;font-size:12px;color:#333;font-weight:400;">kinte</div>
<div class="sp" style="left:466.5px;top:301.0px"></div><div class="t" style="left:516.90px;top:289.24px;font-size:12px;color:#333;font-weight:400;">kunta</div>
<div class="t" style="left:567.40px;top:289.24px;font-size:12px;color:#333;font-weight:400;">kinte</div>
<div class="sp" style="left:567.5px;top:301.0px"></div><div class="t" style="left:112.90px;top:315.24px;font-size:12px;color:#333;font-weight:400;">kunta</div>
<div class="t" style="left:163.40px;top:315.24px;font-size:12px;color:#333;font-weight:400;">kinte</div>
<div class="sp" style="left:163.5px;top:327.0px"></div><div class="t" style="left:213.90px;top:315.24px;font-size:12px;color:#333;font-weight:400;">kunta</div>
<div class="t" style="left:264.40px;top:315.24px;font-size:12px;color:#333;font-weight:400;">kinte</div>
<div class="sp" style="left:264.5px;top:327.0px"></div><div class="t" style="left:314.90px;top:315.24px;font-size:12px;color:#333;font-weight:400;">kunta</div>
<div class="t" style="left:365.40px;top:315.24px;font-size:12px;color:#333;font-weight:400;">kinte</div>
<div class="sp" style="left:365.5px;top:327.0px"></div><div class="t" style="left:415.90px;top:315.24px;font-size:12px;color:#333;font-weight:400;">kunta</div>
<div class="t" style="left:466.40px;top:315.24px;font-size:12px;color:#333;font-weight:400;">kinte</div>
<div class="sp" style="left:466.5px;top:327.0px"></div><div class="t" style="left:516.90px;top:315.24px;font-size:12px;color:#333;font-weight:400;">kunta</div>
<div class="t" style="left:567.40px;top:315.24px;font-size:12px;color:#333;font-weight:400;">kinte</div>
<div class="sp" style="left:567.5px;top:327.0px"></div><div class="t" style="left:112.90px;top:341.24px;font-size:12px;color:#333;font-weight:400;">kunta</div>
<div class="t" style="left:163.40px;top:341.24px;font-size:12px;color:#333;font-weight:400;">kinte</div>
<div class="sp" style="left:163.5px;top:353.0px"></div><div class="t" style="left:213.90px;top:341.24px;font-size:12px;color:#333;font-weight:400;">kunta</div>
<div class="t" style="left:264.40px;top:341.24px;font-size:12px;color:#333;font-weight:400;">kinte</div>
<div class="sp" style="left:264.5px;top:353.0px"></div><div class="t" style="left:314.90px;top:341.24px;font-size:12px;color:#333;font-weight:400;">kunta</div>
<div class="t" style="left:365.40px;top:341.24px;font-size:12px;color:#333;font-weight:400;">kinte</div>
<div class="sp" style="left:365.5px;top:353.0px"></div><div class="t" style="left:415.90px;top:341.24px;font-size:12px;color:#333;font-weight:400;">kunta</div>
<div class="t" style="left:466.40px;top:341.24px;font-size:12px;color:#333;font-weight:400;">kinte</div>
<div class="sp" style="left:466.5px;top:353.0px"></div><div class="t" style="left:516.90px;top:341.24px;font-size:12px;color:#333;font-weight:400;">kunta</div>
<div class="t" style="left:567.40px;top:341.24px;font-size:12px;color:#333;font-weight:400;">kinte</div>
<div class="sp" style="left:567.5px;top:353.0px"></div><div class="t" style="left:112.90px;top:367.24px;font-size:12px;color:#333;font-weight:400;">kunta</div>
<div class="t" style="left:163.40px;top:367.24px;font-size:12px;color:#333;font-weight:400;">kinte</div>
<div class="sp" style="left:163.5px;top:379.0px"></div><div class="t" style="left:213.90px;top:367.24px;font-size:12px;color:#333;font-weight:400;">kunta</div>
<div class="t" style="left:264.40px;top:367.24px;font-size:12px;color:#333;font-weight:400;">kinte</div>
<div class="sp" style="left:264.5px;top:379.0px"></div><div class="t" style="left:314.90px;top:367.24px;font-size:12px;color:#333;font-weight:400;">kunta</div>
<div class="t" style="left:365.40px;top:367.24px;font-size:12px;color:#333;font-weight:400;">kinte</div>
<div class="sp" style="left:365.5px;top:379.0px"></div><div class="t" style="left:415.90px;top:367.24px;font-size:12px;color:#333;font-weight:400;">kunta</div>
<div class="t" style="left:466.40px;top:367.24px;font-size:12px;color:#333;font-weight:400;">kinte</div>
<div class="sp" style="left:466.5px;top:379.0px"></div><div class="t" style="left:516.90px;top:367.24px;font-size:12px;color:#333;font-weight:400;">kunta</div>
<div class="t" style="left:567.40px;top:367.24px;font-size:12px;color:#333;font-weight:400;">kinte</div>
<div class="sp" style="left:567.5px;top:379.0px"></div><div class="t" style="left:112.90px;top:393.24px;font-size:12px;color:#333;font-weight:400;">kunta</div>
<div class="t" style="left:163.40px;top:393.24px;font-size:12px;color:#333;font-weight:400;">kinte</div>
<div class="sp" style="left:163.5px;top:405.0px"></div><div class="t" style="left:213.90px;top:393.24px;font-size:12px;color:#333;font-weight:400;">kunta</div>
<div class="t" style="left:264.40px;top:393.24px;font-size:12px;color:#333;font-weight:400;">kinte</div>
<div class="sp" style="left:264.5px;top:405.0px"></div><div class="t" style="left:314.90px;top:393.24px;font-size:12px;color:#333;font-weight:400;">kunta</div>
<div class="t" style="left:365.40px;top:393.24px;font-size:12px;color:#333;font-weight:400;">kinte</div>
<div class="sp" style="left:365.5px;top:405.0px"></div><div class="t" style="left:415.90px;top:393.24px;font-size:12px;color:#333;font-weight:400;">kunta</div>
<div class="t" style="left:466.40px;top:393.24px;font-size:12px;color:#333;font-weight:400;">kinte</div>
<div class="sp" style="left:466.5px;top:405.0px"></div><div class="t" style="left:516.90px;top:393.24px;font-size:12px;color:#333;font-weight:400;">kunta</div>
<div class="t" style="left:567.40px;top:393.24px;font-size:12px;color:#333;font-weight:400;">kinte</div>
<div class="sp" style="left:567.5px;top:405.0px"></div><div class="t" style="left:112.90px;top:419.24px;font-size:12px;color:#333;font-weight:400;">kunta</div>
<div class="t" style="left:163.40px;top:419.24px;font-size:12px;color:#333;font-weight:400;">kinte</div>
<div class="sp" style="left:163.5px;top:431.0px"></div><div class="t" style="left:213.90px;top:419.24px;font-size:12px;color:#333;font-weight:400;">kunta</div>
<div class="t" style="left:264.40px;top:419.24px;font-size:12px;color:#333;font-weight:400;">kinte</div>
<div class="sp" style="left:264.5px;top:431.0px"></div><div class="t" style="left:314.90px;top:419.24px;font-size:12px;color:#333;font-weight:400;">kunta</div>
<div class="t" style="left:365.40px;top:419.24px;font-size:12px;color:#333;font-weight:400;">kinte</div>
<div class="sp" style="left:365.5px;top:431.0px"></div><div class="t" style="left:415.90px;top:419.24px;font-size:12px;color:#333;font-weight:400;">kunta</div>
<div class="t" style="left:466.40px;top:419.24px;font-size:12px;color:#333;font-weight:400;">kinte</div>
<div class="sp" style="left:466.5px;top:431.0px"></div><div class="t" style="left:516.90px;top:419.24px;font-size:12px;color:#333;font-weight:400;">kunta</div>
<div class="t" style="left:567.40px;top:419.24px;font-size:12px;color:#333;font-weight:400;">kinte</div>
<div class="sp" style="left:567.5px;top:431.0px"></div><div class="t" style="left:112.90px;top:445.24px;font-size:12px;color:#333;font-weight:400;">kunta</div>
<div class="t" style="left:163.40px;top:445.24px;font-size:12px;color:#333;font-weight:400;">kinte</div>
<div class="sp" style="left:163.5px;top:457.0px"></div><div class="t" style="left:213.90px;top:445.24px;font-size:12px;color:#333;font-weight:400;">kunta</div>
<div class="t" style="left:264.40px;top:445.24px;font-size:12px;color:#333;font-weight:400;">kinte</div>
<div class="sp" style="left:264.5px;top:457.0px"></div><div class="t" style="left:314.90px;top:445.24px;font-size:12px;color:#333;font-weight:400;">kunta</div>
<div class="t" style="left:365.40px;top:445.24px;font-size:12px;color:#333;font-weight:400;">kinte</div>
<div class="sp" style="left:365.5px;top:457.0px"></div><div class="t" style="left:415.90px;top:445.24px;font-size:12px;color:#333;font-weight:400;">kunta</div>
<div class="t" style="left:466.40px;top:445.24px;font-size:12px;color:#333;font-weight:400;">kinte</div>
<div class="sp" style="left:466.5px;top:457.0px"></div><div class="t" style="left:516.90px;top:445.24px;font-size:12px;color:#333;font-weight:400;">kunta</div>
<div class="t" style="left:567.40px;top:445.24px;font-size:12px;color:#333;font-weight:400;">kinte</div>
<div class="t" style="left:112.90px;top:471.24px;font-size:12px;color:#333;font-weight:400;">kunta</div>
<div class="t" style="left:163.40px;top:471.24px;font-size:12px;color:#333;font-weight:400;">kinte</div>
<div class="sp" style="left:163.5px;top:483.0px"></div><div class="t" style="left:213.90px;top:471.24px;font-size:12px;color:#333;font-weight:400;">kunta</div>
<div class="t" style="left:264.40px;top:471.24px;font-size:12px;color:#333;font-weight:400;">kinte</div>
<div class="sp" style="left:264.5px;top:483.0px"></div><div class="t" style="left:314.90px;top:471.24px;font-size:12px;color:#333;font-weight:400;">kunta</div>
<div class="t" style="left:365.40px;top:471.24px;font-size:12px;color:#333;font-weight:400;">kinte</div>
<div class="sp" style="left:365.5px;top:483.0px"></div><div class="t" style="left:415.90px;top:471.24px;font-size:12px;color:#333;font-weight:400;">kunta</div>
<div class="t" style="left:466.40px;top:471.24px;font-size:12px;color:#333;font-weight:400;">kinte</div>
<div class="sp" style="left:466.5px;top:483.0px"></div><div class="t" style="left:516.90px;top:471.24px;font-size:12px;color:#333;font-weight:400;">kunta</div>
<div class="t" style="left:567.40px;top:471.24px;font-size:12px;color:#333;font-weight:400;">kinte</div>
<div class="sp" style="left:567.5px;top:483.0px"></div></div>
<div id="sbar"></div>
<div id="thumb"><div style="position:absolute;left:2px;top:60.5px;width:6px;height:1px;background:#777;box-shadow:0 2px 0 #777,0 4px 0 #777"></div></div>
<svg style="position:absolute;left:720.5px;top:197px" width="8" height="5"><path d="M0.3 4.2 L6.7 4.2 L3.6 0.6 Z" fill="#3a3a3a"/></svg>
<svg style="position:absolute;left:720.5px;top:600px" width="8" height="5"><path d="M0.3 0.6 L6.7 0.6 L3.6 4.2 Z" fill="#3a3a3a"/></svg>
<div id="tabtab"></div>
<div id="dd"></div>
<div id="tabcover"></div>
<div class="t" style="left:315.10px;top:85.93px;font-size:10.6px;color:#222;font-weight:400;">Tablo</div>
<div class="t" style="left:322.60px;top:113.64px;font-size:10px;color:#333;font-weight:400;">Tablo ekle</div>
<div class="t" style="left:322.60px;top:145.03px;font-size:10px;color:#333;font-weight:400;">Yukarı satır ekle</div>
<div id="hl"></div>
<div class="t" style="left:322.60px;top:165.33px;font-size:10px;color:#333;font-weight:400;">Aşağı satır ekle</div>
<div class="t" style="left:322.60px;top:186.13px;font-size:10px;color:#333;font-weight:400;">Sola sütun ekle</div>
<div class="t" style="left:322.60px;top:207.83px;font-size:10px;color:#333;font-weight:400;">Sağa sütun ekle</div>
<div class="t" style="left:322.60px;top:239.23px;font-size:10px;color:#333;font-weight:400;">Tabloyu sil</div>
<div class="t" style="left:322.60px;top:260.54px;font-size:10px;color:#333;font-weight:400;">Satırı sil</div>
<div class="t" style="left:322.60px;top:280.94px;font-size:10px;color:#333;font-weight:400;">Sütunu sil</div>
<div class="t" style="left:322.60px;top:312.54px;font-size:10px;color:#333;font-weight:400;">Tablo özellikleri...</div>
<svg style="position:absolute;left:420px;top:116px" width="6" height="6"><path d="M0.5 0.5 L4.5 3 L0.5 5.5 Z" fill="#aaa"/></svg>
<div class="sep" style="top:132.5px"></div>
<div class="sep" style="top:228.5px"></div>
<div class="sep" style="top:301px"></div>
<svg style="position:absolute;left:390px;top:155px" width="30" height="30" viewBox="390 155 30 30">
 <path d="M402.2 160 L402.2 170.6 Q400.6 169.6 399.5 170.6 Q399 171.6 400.1 173.1 L402.6 177.5 L412.6 177.5 Q413.3 174.5 413.2 171.2 Q413.1 169.6 411.7 169.5 Q411.3 167.9 409.5 167.9 Q409.1 166.1 407.3 166.2 L406.2 166.4 L406.2 160 Z" fill="#fbfbfb" stroke="#1e1e1e" stroke-width="0.85"/>
 <rect x="402.8" y="160" width="3" height="10" fill="#c8c8c8" opacity="0.55"/>
 <path d="M406.2 166.4 L406.2 170 M409.5 168 L409.5 170.6 M411.7 169.6 L411.7 171.3" stroke="#1e1e1e" stroke-width="0.8"/>
</svg>
<div id="hlb"></div>

</body></html>
